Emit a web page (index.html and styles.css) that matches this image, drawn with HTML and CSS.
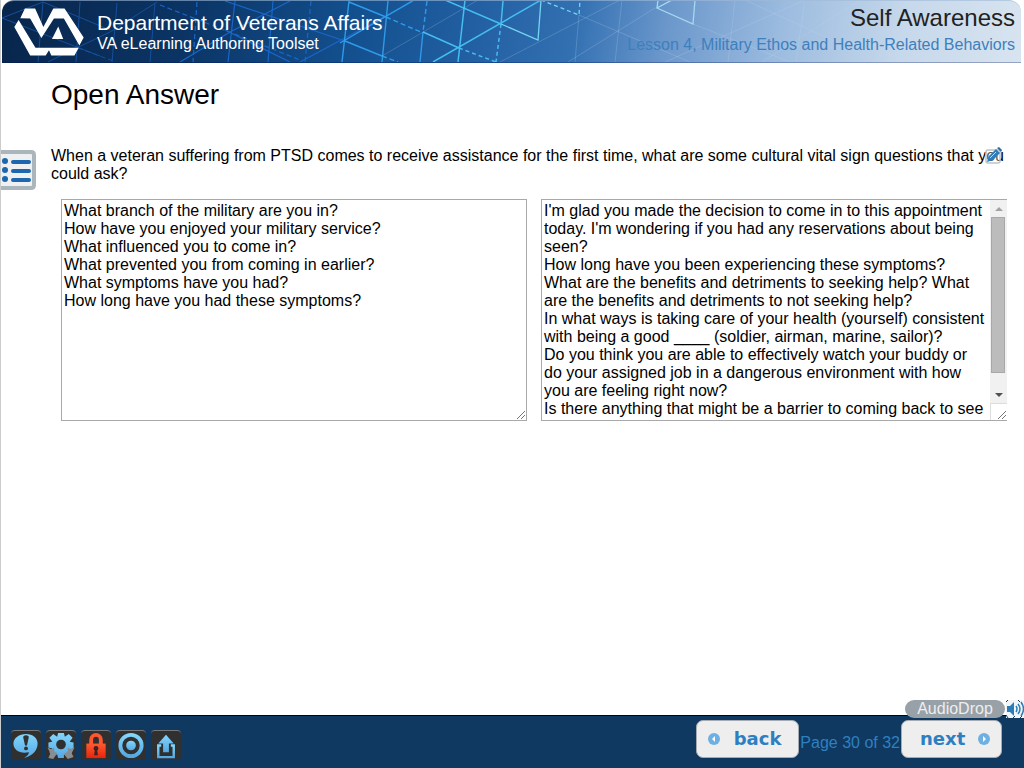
FILE: index.html
```html
<!DOCTYPE html>
<html lang="en">
<head>
<meta charset="utf-8">
<title>Self Awareness - Open Answer</title>
<link rel="stylesheet" href="styles.css">
</head>
<body>
<div class="page">
  <header class="banner">
    <svg class="banner-art" viewBox="2 1 1019 61" preserveAspectRatio="xMinYMin slice" aria-hidden="true">
      <g fill="none" stroke="#174f9c" stroke-width="1">
        <path d="M2 18L43 2L38 62M43 2L110 30M2 18L100 56M80 2L76 62M117 3L112 62M157 2L110 32L62 55M155 3L150 62M48 62L80 46"/>
        <path stroke-dasharray="5 3" d="M78 48L116 62"/>
      </g>
      <g fill="none" stroke="#1a66c8" stroke-width="1.2">
        <path d="M235 1L228 62M290 1L230 32L180 62M225 1L345 41M273 1L268 62M412 2L300 62M225 30L290 62"/>
        <path stroke-dasharray="5 3" d="M160 5L232 33L300 60M197 2L193 62M311 1L305 62"/>
      </g>
      <g fill="none" stroke="#2e9ae8" stroke-width="1.4">
        <path d="M349 1L342 62M349 2L386 17M388 1L382 62M414 0L340 43M345 41L382 56M423 32L420 62"/>
        <path stroke-dasharray="5 3" d="M386 17L423 33M427 1L423 32M382 56L398 62"/>
      </g>
      <g fill="none" stroke="#45bdf0" stroke-width="1.5">
        <path d="M423 32L459 48M445 0L501 24M465 0L458 62M503 1L501 24M541 0L433 62"/>
        <path stroke-dasharray="4 3" d="M459 48L496 62M501 24L496 62"/>
      </g>
      <g fill="none" stroke="#72d6f0" stroke-width="1.3">
        <path d="M501 24L538 40L541 0"/>
        <path stroke-dasharray="4 3" d="M541 0L579 15L580 0"/>
        <path stroke="#a5d9ee" d="M672 0L657 8L693 24L695 0M657 8L658 0"/>
      </g>
      <g fill="none" stroke="#c4dcf0" stroke-opacity=".22" stroke-width="1">
        <path d="M478 0L382 56M620 0L500 62M579 15L690 62M579 15L575 62M622 0L615 62M655 8L568 62M665 62L805 0M693 24L790 62M735 0L728 62M745 0L880 62M762 62L860 0M805 0L796 62"/>
      </g>
    </svg>
    <svg class="logo" viewBox="36 20 218 150" role="img" aria-label="VA">
      <g fill="#fff">
        <path d="M58 53L72 24H103L128 80L158 24H192L250 112L237 136L190 54H160L122 113L88 54Z"/>
        <path d="M53 59L40 80L88 166H135L145 150L152 166H222L235 143H104Z"/>
        <path d="M173 78L188 116H154Z"/>
      </g>
    </svg>
    <div class="brand">
      <div class="brand-name">Department of Veterans Affairs</div>
      <div class="brand-sub">VA eLearning Authoring Toolset</div>
    </div>
    <div class="course">
      <div class="course-name">Self Awareness</div>
      <div class="lesson-name">Lesson 4, Military Ethos and Health-Related Behaviors</div>
    </div>
  </header>

  <main class="content">
    <button class="toc" type="button" aria-label="Table of contents">
      <svg width="36" height="40" viewBox="0 0 36 40" aria-hidden="true">
        <path d="M0 2H30Q33 2 33 5V35Q33 38 30 38H0" fill="#eef0f1" stroke="#aab5bc" stroke-width="4"/>
        <g fill="#1c67ad"><circle cx="4" cy="11" r="3"/><circle cx="4" cy="20" r="3"/><circle cx="4" cy="29" r="3"/>
        <rect x="10" y="10" width="20" height="4" rx="2"/><rect x="10" y="19" width="20" height="4" rx="2"/><rect x="10" y="28" width="20" height="4" rx="2"/></g>
      </svg>
    </button>
    <h1 class="title">Open Answer</h1>
    <div class="question">
      <p class="prompt" id="prompt">When a veteran suffering from PTSD comes to receive assistance for the first time, what are some cultural vital sign questions that you could ask?</p>
      <button class="note" type="button" aria-label="Add note">
        <svg width="18" height="18" viewBox="0 0 18 18" aria-hidden="true">
          <rect x="1" y="3" width="14" height="13" rx="2" fill="#fff" fill-opacity=".35" stroke="#bdc3c7" stroke-width="1.5"/>
          <path d="M2 15L4 9L11 2L15 6L8 13Z" fill="#2d7dbb"/><path d="M12 1L14 0L17 3L16 5Z" fill="#2c6da5"/><path d="M5 11L11 5" stroke="#bcd9ee"/>
        </svg>
      </button>
    </div>
    <div class="answers">
      <div class="box">
        <textarea class="answer" aria-labelledby="prompt">What branch of the military are you in?
How have you enjoyed your military service?
What influenced you to come in?
What prevented you from coming in earlier?
What symptoms have you had?
How long have you had these symptoms?</textarea>
        <svg class="grip" width="10" height="10" viewBox="0 0 10 10" aria-hidden="true"><path d="M1 9L9 1M5 9L9 5" stroke="#777"/></svg>
      </div>
      <div class="box box-open">
        <textarea class="answer" aria-label="Suggested answer">I'm glad you made the decision to come in to this appointment today. I'm wondering if you had any reservations about being seen?
How long have you been experiencing these symptoms?
What are the benefits and detriments to seeking help? What are the benefits and detriments to not seeking help?
In what ways is taking care of your health (yourself) consistent with being a good ____ (soldier, airman, marine, sailor)?
Do you think you are able to effectively watch your buddy or do your assigned job in a dangerous environment with how you are feeling right now?
Is there anything that might be a barrier to coming back to see</textarea>
        <div class="scroll" aria-hidden="true">
          <div class="arrow"><svg width="8" height="4" viewBox="0 0 8 4"><path d="M0 4L4 0L8 4Z" fill="#a3a3a3"/></svg></div>
          <div class="track"><div class="thumb"></div></div>
          <div class="arrow"><svg width="8" height="4" viewBox="0 0 8 4"><path d="M0 0L4 4L8 0Z" fill="#505050"/></svg></div>
          <div class="corner"><svg class="grip" width="10" height="10" viewBox="0 0 10 10"><path d="M1 9L9 1M5 9L9 5" stroke="#777"/></svg></div>
        </div>
      </div>
    </div>
  </main>

  <footer class="bar">
    <div class="tools">
      <button class="tool" type="button" aria-label="Comment">
        <svg viewBox="0 0 30 30"><path d="M15 3C22 3 27 7 27 13C27 20 22 26 13 28C16 26 18 24 18 22C9 24 2 20 2 13C2 7 8 3 15 3Z" fill="url(#sky)"/><path d="M12 6Q15 3 18 6L16 15H14Z" fill="#303030"/><circle cx="15" cy="18" r="2" fill="#303030"/></svg>
      </button>
      <button class="tool" type="button" aria-label="Settings">
        <svg viewBox="0 0 30 30"><path d="M12 2H18L19 6L23 3L27 7L24 11L28 12V18L24 19L26 23L22 27L18 24V28H12L11 24L7 26L3 22L6 18L2 17V12L6 11L3 7L7 3L11 6Z" fill="url(#sky)"/><circle cx="15" cy="14" r="5" fill="#303030"/><path d="M1 17L5 19L8 17V21L11 23L7 29L2 28L4 23ZM29 17L25 19L22 17V21L18 24L22 29L28 27L26 23Z" fill="#888d91"/></svg>
      </button>
      <button class="tool" type="button" aria-label="Lock">
        <svg viewBox="0 0 30 30"><path d="M10 14V9A5 5 0 0 1 20 9V14" fill="none" stroke="#ff5630" stroke-width="4"/><rect x="5" y="13" width="20" height="15" fill="url(#fire)"/><circle cx="15" cy="18" r="2.5" fill="#402020"/><path d="M14 19H16L17 25H13Z" fill="#402020"/></svg>
      </button>
      <button class="tool" type="button" aria-label="Target">
        <svg viewBox="0 0 30 30"><circle cx="15" cy="15" r="11" fill="none" stroke="url(#sky)" stroke-width="4"/><circle cx="15" cy="15" r="5" fill="url(#sky)"/></svg>
      </button>
      <button class="tool" type="button" aria-label="Export">
        <svg viewBox="0 0 30 30"><path d="M15 4L23 13H18V22H12V13H7Z" fill="url(#sky)"/><path d="M10 15H7V27H23V15H20" fill="none" stroke="url(#sky)" stroke-width="2.5"/></svg>
      </button>
    </div>
    <nav class="pager" aria-label="Pages">
      <button class="nav" type="button"><svg width="12" height="12" viewBox="0 0 12 12" aria-hidden="true"><circle cx="6" cy="6" r="6" fill="#6eb0e2"/><path d="M7 3L4 6L7 9Z" fill="#fff"/></svg>back</button>
      <span class="count">Page 30 of 32</span>
      <button class="nav nav-next" type="button">next<svg width="12" height="12" viewBox="0 0 12 12" aria-hidden="true"><circle cx="6" cy="6" r="6" fill="#6eb0e2"/><path d="M5 3L8 6L5 9Z" fill="#fff"/></svg></button>
    </nav>
    <div class="audio">
      <button class="audio-drop" type="button">AudioDrop</button>
      <svg width="18" height="18" viewBox="0 0 18 18" aria-hidden="true"><rect width="18" height="18" fill="#f2f5f7"/><path d="M0 2L2 0M0 15L2 18M12 0L14 2M7 18L9 16M14 18L16 16" stroke="#17395e" stroke-width="1"/><path d="M1 6H4L8 2V16L4 12H1Z" fill="#2b7cb8"/><path d="M10 6Q12 9 10 12M12 4Q16 9 12 14M15 2Q20 9 15 16" fill="none" stroke="#2b7cb8" stroke-width="1.5"/></svg>
    </div>
  </footer>
</div>
<svg class="defs" width="0" height="0" aria-hidden="true"><defs>
  <linearGradient id="sky" x1="0" y1="0" x2="0" y2="1"><stop offset="0" stop-color="#82d5fa"/><stop offset="1" stop-color="#54a9e5"/></linearGradient>
  <linearGradient id="fire" x1="0" y1="0" x2="0" y2="1"><stop offset="0" stop-color="#ff5a30"/><stop offset="1" stop-color="#e8240c"/></linearGradient>
</defs></svg>
</body>
</html>
```

FILE: styles.css
```css
* { box-sizing: border-box; }
body {
  margin: 0;
  font: 16px/18px "Liberation Sans", Arial, sans-serif;
  color: #000;
  background: #fff;
}
button { font: inherit; padding: 0; border: 0; background: none; cursor: pointer; }
svg { display: block; }
.defs { position: absolute; }

.page {
  min-height: 100vh;
  display: flex;
  flex-direction: column;
  border-left: 1px solid #ccc;
  overflow: hidden;
}

.banner {
  position: relative;
  display: flex;
  height: 63px;
  margin: 0 3px 0 1px;
  padding: 0 6px 0 11px;
  border-top: 1px solid rgba(160, 185, 215, .6);
  border-bottom: 1px solid rgba(0, 15, 90, .3);
  border-radius: 12px 12px 0 0;
  overflow: hidden;
  background: linear-gradient(100deg, #08264c 0%, #0b3464 18%, #134f8d 34%, #215fa2 46%, #3270b2 56%, #6b97cb 65%, #9bbbdf 76%, #c6d8eb 88%, #d8e4f0 100%) border-box;
}
.banner-art { position: absolute; left: 0; top: 0; width: 100%; height: 100%; }
.logo { position: relative; width: 72px; height: 50px; margin-top: 6px; flex: none; }
.brand { position: relative; flex: none; margin-left: 12px; padding-top: 10px; color: #fff; }
.brand-name { font-size: 21px; line-height: 24px; }
.brand-sub { font-size: 16px; line-height: 18px; }
.course { position: relative; margin-left: auto; text-align: right; }
.course-name { font-size: 24px; line-height: 34px; color: #222; }
.lesson-name { line-height: 20px; color: #3d80bd; }

.content {
  position: relative;
  flex: 1;
  padding: 14px 17px 0 50px;
}
.toc { position: absolute; left: 0; top: 87px; }
.title { margin: 0 0 34px; font-size: 28px; line-height: 36px; font-weight: 400; }
.question { position: relative; }
.prompt { margin: 0; }
.note { position: absolute; right: 4px; top: 0; }

.answers {
  display: grid;
  grid-template-columns: 1fr 1fr;
  gap: 14px;
  margin-top: 16px;
  padding-left: 10px;
}
.box { position: relative; display: flex; border: 1px solid #a9a9a9; }
.box-open { border-right: 0; }
.answer {
  flex: 1;
  min-width: 0;
  height: 220px;
  padding: 2px;
  border: 0;
  outline: 0;
  resize: none;
  overflow: hidden;
  font: inherit;
  color: #000;
  background: #fff;
}
.grip { position: absolute; right: 0; bottom: 0; }
.scroll { display: flex; flex-direction: column; width: 17px; background: #f1f1f1; }
.arrow { height: 17px; display: grid; place-items: center; }
.track { flex: 1; padding: 0 2px 13px 1px; }
.thumb { height: 100%; background: #bcbcbc; border: 1px solid #a8a8a8; }
.corner { position: relative; height: 17px; background: #fff; border: 1px solid #ddd; border-width: 1px 0 0 1px; }

.bar {
  position: relative;
  display: flex;
  justify-content: space-between;
  height: 53px;
  border-top: 1px solid #00002c;
  background: #0f3960;
  padding: 0 22px 0 10px;
}
.tools { display: flex; gap: 5px; padding-top: 14px; }
.tool {
  width: 30px;
  height: 30px;
  border-radius: 4px;
  background: #303030;
  border-top: 1px solid #777;
}
.tool svg { width: 30px; height: 29px; }
.pager { display: flex; gap: 1px; padding-top: 4px; }
.nav {
  display: flex;
  align-items: center;
  justify-content: space-between;
  width: 103px;
  height: 38px;
  padding: 0 17px 0 11px;
  border: 1px solid #a5abb0;
  border-radius: 7px;
  background: #eee;
  color: #2e7fc1;
  font: bold 18px/22px "DejaVu Sans", Verdana, sans-serif;
}
.nav-next { width: 101px; padding: 0 11px 0 18px; }
.count { padding-top: 14px; color: #2e80c0; }
.audio { position: absolute; right: 0; top: -16px; display: flex; gap: 1px; }
.audio-drop { width: 100px; height: 18px; border-radius: 9px; background: #98a1a7; color: #eee; line-height: 18px; }
```
